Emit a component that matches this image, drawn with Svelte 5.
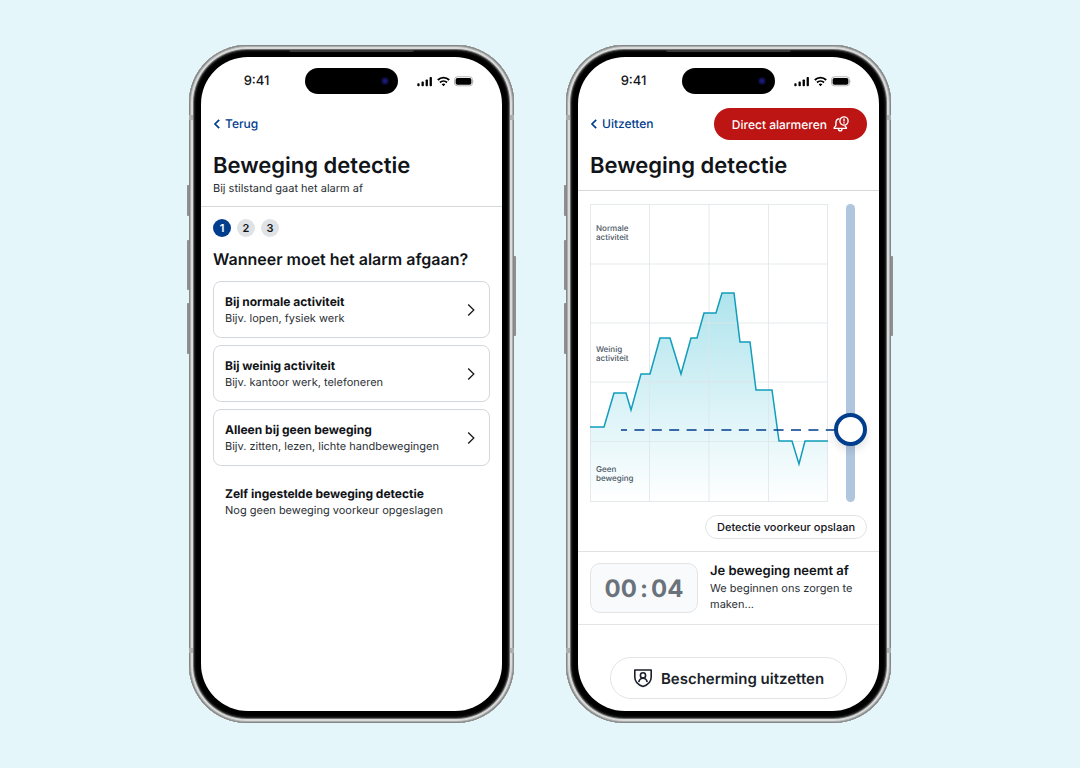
<script lang="ts">
  type Option = {
    title: string;
    hint: string;
  };

  const options: Option[] = [
    { title: 'Bij normale activiteit', hint: 'Bijv. lopen, fysiek werk' },
    { title: 'Bij weinig activiteit', hint: 'Bijv. kantoor werk, telefoneren' },
    { title: 'Alleen bij geen beweging', hint: 'Bijv. zitten, lezen, lichte handbewegingen' },
  ];

  const steps = [1, 2, 3];
  let currentStep = $state(1);

  // detection threshold, 0 = no movement, 100 = normal activity
  let threshold = $state(21);
  const thumb = 33;
  const chartHeight = 298;
  let thresholdY = $derived(
    Math.round(chartHeight - thumb / 2 - (threshold / 100) * (chartHeight - thumb))
  );

  const activity =
    '0,223 14,223 24,189 36,189 41,206 51,170 60,170 70,134 80,134 91,170 101,134 107,134 114,109 126,109 132,89 144,89 150,138 160,138 166,186 182,186 189,237 202,237 209,260 215,237 238,237';
</script>

{#snippet statusBar()}
  <div class="status">
    <span class="time">9:41</span>
    <span class="island"><i class="lens"></i></span>
    <span class="signals">
      <svg width="16" height="11" viewBox="0 0 16 11" aria-hidden="true">
        <rect x="0.3" y="7.3" width="2.3" height="3" rx="0.8" />
        <rect x="4.5" y="5.6" width="2.3" height="4.7" rx="0.8" />
        <rect x="8.6" y="3.4" width="2.3" height="6.9" rx="0.8" />
        <rect x="12.6" y="1" width="2.3" height="9.3" rx="0.8" />
      </svg>
      <svg width="13" height="11" viewBox="0 0 13 11" aria-hidden="true">
        <path d="M0.8 4 C4 0.8 9 0.8 12.2 4" fill="none" stroke="#000" stroke-width="1.9" />
        <path d="M3 6.5 C5 4.6 8 4.6 10 6.5" fill="none" stroke="#000" stroke-width="1.8" />
        <path d="M4.6 8.2 Q6.5 6.8 8.4 8.2 L6.5 10.3 Z" />
      </svg>
      <svg width="21" height="11" viewBox="0 0 21 11" aria-hidden="true">
        <rect x="0.5" y="0.8" width="18" height="9" rx="2.8" fill="none" stroke="#b5b5b5" />
        <rect x="1.6" y="1.9" width="15.8" height="6.8" rx="1.8" />
        <path d="M19.4 4 Q20.8 5.3 19.4 6.6 Z" fill="#b5b5b5" />
      </svg>
    </span>
  </div>
{/snippet}

{#snippet hardware()}
  <i class="key action"></i>
  <i class="key up"></i>
  <i class="key down"></i>
  <i class="key power"></i>
  <i class="antenna top"></i>
  <i class="antenna bottom"></i>
  <i class="speaker"></i>
{/snippet}

{#snippet back(label: string)}
  <a class="back" href="#terug">
    <svg width="8" height="12" viewBox="0 0 8 12" aria-hidden="true">
      <path d="M6.2 1.8 L2 6 L6.2 10.2" fill="none" stroke="currentColor" stroke-width="1.7" />
    </svg>
    {label}
  </a>
{/snippet}

<main>
  <section class="phone">
    {@render hardware()}
    <div class="screen">
      {@render statusBar()}
      <header>
        <nav>{@render back('Terug')}</nav>
        <h1>Beweging detectie</h1>
        <p>Bij stilstand gaat het alarm af</p>
      </header>

      <div class="content">
        <div class="steps">
          {#each steps as step}
            <button class:active={step === currentStep} onclick={() => (currentStep = step)}>{step}</button>
          {/each}
        </div>

        <h2>Wanneer moet het alarm afgaan?</h2>

        <div class="options">
          {#each options as option}
            <button class="option">
              <span>
                <strong>{option.title}</strong>
                <small>{option.hint}</small>
              </span>
              <svg width="8" height="14" viewBox="0 0 8 14" aria-hidden="true">
                <path d="M1.2 1.5 L6.8 7 L1.2 12.5" fill="none" stroke="#15181c" stroke-width="1.3" />
              </svg>
            </button>
          {/each}
          <div class="option empty">
            <span>
              <strong>Zelf ingestelde beweging detectie</strong>
              <small>Nog geen beweging voorkeur opgeslagen</small>
            </span>
          </div>
        </div>
      </div>
    </div>
  </section>

  <section class="phone">
    {@render hardware()}
    <div class="screen">
      {@render statusBar()}
      <header>
        <nav>
          {@render back('Uitzetten')}
          <button class="alarm">
            Direct alarmeren
            <svg width="16" height="16" viewBox="0 0 16 16" fill="none" stroke="#fff" stroke-width="1.4" aria-hidden="true">
              <path d="M6.4 2.6 C4 3 2.9 4.8 2.9 7 V9.6 L1.2 11.6 V12.4 H13.4 V11.6 L11.8 9.8" stroke-linejoin="round" />
              <path d="M5.4 12.6 C5.6 15.6 8.9 15.6 9.1 12.6" />
              <circle cx="11" cy="5" r="4.1" />
              <path d="M11 2.4 V5.4 M11 6.3 V7.6" />
            </svg>
          </button>
        </nav>
        <h1>Beweging detectie</h1>
      </header>

      <div class="monitor">
        <div class="chart-row">
          <svg class="chart" viewBox="0 0 238 298" role="img" aria-label="Activiteit">
            <defs>
              <linearGradient id="fade" gradientUnits="userSpaceOnUse" x1="0" y1="89" x2="0" y2="298">
                <stop offset="0" stop-color="#afe4ed" />
                <stop offset="1" stop-color="#afe4ed" stop-opacity="0" />
              </linearGradient>
            </defs>
            <polygon points="{activity} 238,298 0,298" fill="url(#fade)" />
            <g stroke="#dfe5e8" stroke-opacity="0.8" fill="none">
              <rect x="0.5" y="0.5" width="237" height="297" />
              {#each [59.5, 119, 178.5] as x}
                <line x1={x} x2={x} y1="0" y2="298" />
              {/each}
              {#each [60, 119, 178, 237.5] as y}
                <line x1="0" x2="238" y1={y} y2={y} />
              {/each}
            </g>
            <polyline points={activity} fill="none" stroke="#119dbb" stroke-width="1.5" />
            <line x1="31" x2="246" y1={thresholdY} y2={thresholdY} stroke="#003d8c" stroke-width="1.6" stroke-dasharray="10 7.4" stroke-dashoffset="4" />
            <g class="labels">
              <text x="6" y="27">Normale</text>
              <text x="6" y="36">activiteit</text>
              <text x="6" y="148">Weinig</text>
              <text x="6" y="157">activiteit</text>
              <text x="6" y="268">Geen</text>
              <text x="6" y="277">beweging</text>
            </g>
          </svg>
          <input type="range" min="0" max="100" bind:value={threshold} aria-label="Detectie voorkeur" />
        </div>
        <button class="save">Detectie voorkeur opslaan</button>
      </div>

      <div class="alert">
        <div class="timer"><span>00</span><span>:</span><span>04</span></div>
        <div class="message">
          <h3>Je beweging neemt af</h3>
          <p>We beginnen ons zorgen te maken...</p>
        </div>
      </div>

      <button class="disable">
        <svg width="20" height="20" viewBox="0 0 20 20" fill="none" stroke="#1b1f2a" stroke-width="1.6" aria-hidden="true">
          <path d="M1.8 2 H18.2 V9 C18.2 14 14.5 17 10 18.4 C5.5 17 1.8 14 1.8 9 Z" stroke-linejoin="round" />
          <circle cx="10" cy="7.4" r="2.6" />
          <path d="M5.8 14.2 C6.8 9 13.2 9 14.2 14.2" />
        </svg>
        Bescherming uitzetten
      </button>
    </div>
  </section>
</main>

<style>
  :global(body) {
    margin: 0;
    background: #e4f6fa;
    color: #111418;
    font-family: Inter, 'Liberation Sans', sans-serif;
    text-rendering: geometricPrecision;
  }

  main {
    min-height: 100vh;
    box-sizing: border-box;
    padding: 24px;
    display: flex;
    flex-wrap: wrap;
    justify-content: center;
    align-items: center;
    gap: 52px;
  }

  h1, h2, h3, p {
    margin: 0;
  }

  button {
    font: inherit;
    color: inherit;
    cursor: pointer;
    padding: 0;
    text-rendering: inherit;
  }

  /* device */
  .phone {
    position: relative;
    box-sizing: border-box;
    width: 100%;
    max-width: 325px;
    min-height: 678px;
    padding: 12px;
    display: flex;
    border-radius: 58px;
    background: #000;
    box-shadow:
      inset 0 0 0 1px #858686,
      inset 0 0 0 2px #adaeae,
      inset 0 0 0 4px #d9dada,
      inset 0 0 0 5px #6a6b6b,
      inset 0 0 2px 6px #2b2b2b;
  }

  .screen {
    flex: 1;
    display: flex;
    flex-direction: column;
    background: #fff;
    border-radius: 47px;
    overflow: hidden;
  }

  .key {
    position: absolute;
    left: -2px;
    width: 2px;
    background: #8f8f8f;
    border-radius: 1px 0 0 1px;
  }

  .action {
    top: 140px;
    height: 31px;
  }

  .up {
    top: 195px;
    height: 50px;
  }

  .down {
    top: 258px;
    height: 51px;
  }

  .power {
    left: auto;
    right: -2px;
    top: 211px;
    height: 80px;
    border-radius: 0 1px 1px 0;
  }

  .antenna {
    position: absolute;
    left: 0;
    right: 0;
    height: 5px;
    border: solid #adaeae;
    border-width: 0 4px;
  }

  .antenna.top {
    top: 70px;
  }

  .antenna.bottom {
    bottom: 70px;
  }

  .speaker {
    position: absolute;
    top: 5px;
    left: 100px;
    right: 100px;
    height: 2px;
    background: #3a3a3a;
    border-radius: 0 0 2px 2px;
  }

  .status {
    display: grid;
    grid-template-columns: 1fr 93px 1fr;
    align-items: center;
    height: 48px;
  }

  .time {
    padding-left: 7px;
    text-align: center;
    font-size: 13px;
    font-weight: 500;
  }

  .island {
    height: 26px;
    border-radius: 13px;
    background: #000;
    display: flex;
    align-items: center;
    justify-content: flex-end;
  }

  .lens {
    width: 8px;
    height: 8px;
    margin-right: 9px;
    border-radius: 50%;
    background: radial-gradient(#1c1c78 20%, #08082e 60%, #050510);
  }

  .signals {
    display: flex;
    align-items: center;
    gap: 4px;
    padding-left: 19px;
  }

  /* header */
  header {
    padding: 0 12px 10px;
    border-bottom: 1px solid #d5d9dc;
  }

  nav {
    display: flex;
    align-items: center;
    justify-content: space-between;
    height: 38px;
    margin-bottom: 9px;
  }

  .back {
    display: flex;
    align-items: center;
    gap: 4px;
    color: #003d8c;
    font-size: 12px;
    font-weight: 500;
    line-height: 16px;
    text-decoration: none;
  }

  h1 {
    font-size: 22px;
    font-weight: 600;
    line-height: 28px;
  }

  header p {
    font-size: 11px;
    line-height: 16px;
    color: #2b3036;
  }

  /* choose threshold */
  .content {
    padding: 12px;
  }

  .steps {
    display: flex;
    gap: 6px;
  }

  .steps button {
    width: 18px;
    height: 18px;
    border: 0;
    border-radius: 50%;
    background: #dfe3e6;
    font-size: 11px;
    font-weight: 600;
    line-height: 18px;
  }

  .steps button.active {
    background: #003d8c;
    color: #fff;
  }

  h2 {
    margin: 10px 0;
    font-size: 16px;
    font-weight: 600;
    line-height: 24px;
  }

  .options {
    display: flex;
    flex-direction: column;
    gap: 7px;
  }

  .option {
    display: flex;
    align-items: center;
    justify-content: space-between;
    padding: 11px 14px 10px 11px;
    border: 1px solid #d3d8dc;
    border-radius: 8px;
    background: #fff;
    text-align: left;
  }

  .option.empty {
    border-color: transparent;
  }

  .option strong,
  .option small {
    display: block;
    line-height: 17px;
  }

  .option strong {
    font-size: 12px;
    font-weight: 700;
  }

  .option small {
    font-size: 11px;
    color: #2b3036;
  }

  /* live monitor */
  .alarm {
    display: flex;
    align-items: center;
    gap: 6px;
    height: 32px;
    padding: 0 18px;
    border: 0;
    border-radius: 16px;
    background: #bd1414;
    color: #fff;
    font-size: 12px;
    font-weight: 500;
  }

  .monitor {
    display: flex;
    flex-direction: column;
    gap: 13px;
    padding: 13px 12px 12px;
    border-bottom: 1px solid #dfe2e5;
  }

  .chart-row {
    display: flex;
    justify-content: space-between;
    gap: 6px;
  }

  .chart {
    flex: 1;
    min-width: 0;
    overflow: visible;
  }

  .labels {
    font-size: 8px;
    font-weight: 500;
    fill: #4b5563;
  }

  input[type='range'] {
    appearance: none;
    writing-mode: vertical-lr;
    direction: rtl;
    position: relative;
    width: 33px;
    height: 298px;
    margin: 0;
    background: none;
    cursor: pointer;
  }

  input[type='range']::-webkit-slider-runnable-track {
    width: 9px;
    height: 100%;
    border-radius: 5px;
    background: #b0c5de;
  }

  input[type='range']::-webkit-slider-thumb {
    appearance: none;
    box-sizing: border-box;
    width: 33px;
    height: 33px;
    margin-left: -12px;
    border: 4px solid #003d8c;
    border-radius: 50%;
    background: #fff;
    box-shadow: 0 4px 8px rgba(0, 0, 0, 0.12);
  }

  .save {
    align-self: flex-end;
    height: 24px;
    padding: 0 11px;
    border: 1px solid #dfe3e6;
    border-radius: 12px;
    background: #fff;
    font-size: 11px;
    font-weight: 500;
  }

  .alert {
    display: flex;
    gap: 12px;
    padding: 11px 12px;
    border-bottom: 1px solid #e3e6e8;
  }

  .timer {
    flex: none;
    box-sizing: border-box;
    width: 108px;
    height: 50px;
    display: flex;
    align-items: center;
    justify-content: center;
    gap: 3px;
    border: 1px solid #e1e5e8;
    border-radius: 10px;
    background: #f8fafb;
    color: #6a737b;
    font-size: 24px;
    font-weight: 700;
  }

  h3 {
    font-size: 13px;
    font-weight: 600;
    line-height: 17px;
  }

  .message p {
    font-size: 11px;
    line-height: 16px;
    color: #2b3036;
  }

  .disable {
    align-self: center;
    display: flex;
    align-items: center;
    gap: 8px;
    height: 42px;
    margin: 32px 0 12px;
    padding: 0 22px;
    border: 1px solid #e1e4e7;
    border-radius: 21px;
    background: #fff;
    color: #1b1f2a;
    font-size: 15px;
    font-weight: 600;
  }
</style>
